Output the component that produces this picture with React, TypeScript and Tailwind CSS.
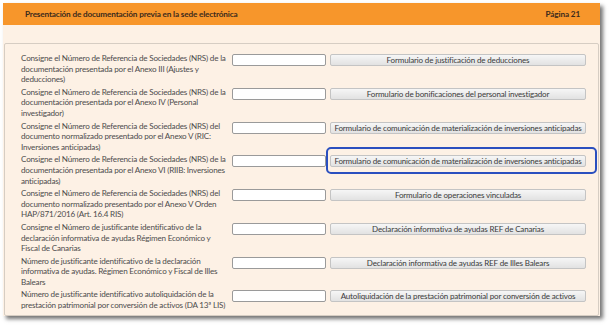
const rows: { text: string[]; button: string; highlight?: boolean }[] = [
  {
    text: [
      "Consigne el Número de Referencia de Sociedades (NRS) de la",
      "documentación presentada por el Anexo III (Ajustes y",
      "deducciones)",
    ],
    button: "Formulario de justificación de deducciones",
  },
  {
    text: [
      "Consigne el Número de Referencia de Sociedades (NRS) de la",
      "documentación presentada por el Anexo IV (Personal",
      "investigador)",
    ],
    button: "Formulario de bonificaciones del personal investigador",
  },
  {
    text: [
      "Consigne el Número de Referencia de Sociedades (NRS) del",
      "documento normalizado presentado por el Anexo V (RIC:",
      "Inversiones anticipadas)",
    ],
    button: "Formulario de comunicación de materialización de inversiones anticipadas",
  },
  {
    text: [
      "Consigne el Número de Referencia de Sociedades (NRS) de la",
      "documentación presentada por el Anexo VI (RIIB: Inversiones",
      "anticipadas)",
    ],
    button: "Formulario de comunicación de materialización de inversiones anticipadas",
    highlight: true,
  },
  {
    text: [
      "Consigne el Número de Referencia de Sociedades (NRS) del",
      "documento normalizado presentado por el Anexo V Orden",
      "HAP/871/2016 (Art. 16.4 RIS)",
    ],
    button: "Formulario de operaciones vinculadas",
  },
  {
    text: [
      "Consigne el Número de justificante identificativo de la",
      "declaración informativa de ayudas Régimen Económico y",
      "Fiscal de Canarias",
    ],
    button: "Declaración informativa de ayudas REF de Canarias",
  },
  {
    text: [
      "Número de justificante identificativo de la declaración",
      "informativa de ayudas. Régimen Económico y Fiscal de Illes",
      "Balears",
    ],
    button: "Declaración informativa de ayudas REF de Illes Balears",
  },
  {
    text: [
      "Número de justificante identificativo autoliquidación de la",
      "prestación patrimonial por conversión de activos (DA 13ª LIS)",
    ],
    button: "Autoliquidación de la prestación patrimonial por conversión de activos",
  },
];

export default function App() {
  return (
    <div
      className="w-[613px] h-[331px] bg-white pt-[3px] pl-[3px] overflow-hidden"
      style={{ fontFamily: "Lato, 'Liberation Sans', sans-serif" }}
    >
      <div className="w-[597px] h-[313px] bg-[#fdf1e5] shadow-[3px_3px_4px_rgba(0,0,0,0.55)] flex flex-col">
        {/* Header */}
        <div className="h-[22px] bg-[#f7962b] flex items-center justify-between pl-[22px] pr-[20px] text-[8.2px] font-bold text-[#3b2a1c] tracking-[-0.15px]">
          <span>Presentación de documentación previa en la sede electrónica</span>
          <span>Página 21</span>
        </div>

        {/* Form box */}
        <div className="mt-[18px] mx-[1px] flex-1 border border-[#d6cdc3] rounded-[2px] pt-[9px] pl-[16px] flex flex-col gap-[2px]">
          {rows.map((r, i) => (
            <div key={i} className="flex items-start">
              <div className="w-[211px] text-[8.1px] leading-[10.6px] text-[#4d4d4d] tracking-[-0.2px] whitespace-nowrap">
                {r.text.map((t, j) => (
                  <div key={j}>{t}</div>
                ))}
              </div>
              <input
                type="text"
                className="mt-[1px] w-[94px] h-[12px] bg-white border border-[#9a9a9a] rounded-[2px] outline-none"
              />
              <div className="relative ml-[4px] mt-[1px]">
                <button className="w-[256px] h-[12px] rounded-[2px] border border-[#c4c4c4] bg-gradient-to-b from-[#f6f6f6] to-[#e2e2e2] text-[8px] leading-none text-[#3a3a3a] tracking-[-0.15px] whitespace-nowrap flex items-center justify-center">
                  {r.button}
                </button>
                {r.highlight && (
                  <div className="absolute -left-[4px] -right-[11px] -top-[8px] -bottom-[7px] border-[2.5px] border-[#2a4fbf] rounded-[5px]" />
                )}
              </div>
            </div>
          ))}
        </div>
      </div>
    </div>
  );
}
